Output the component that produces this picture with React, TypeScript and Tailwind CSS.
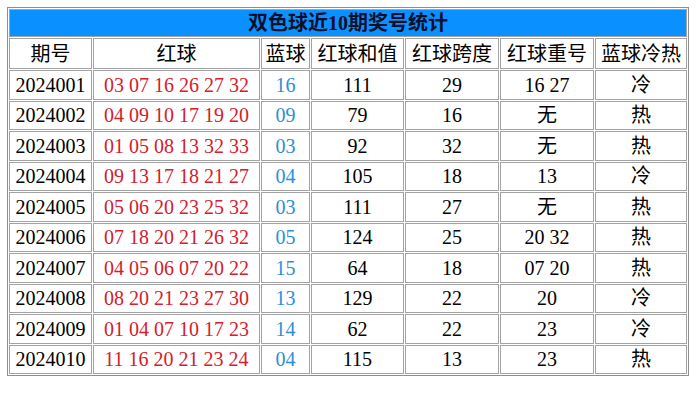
import React from "react";

const rows: [string, string, string, string, string, string, string][] = [
  ["2024001", "03 07 16 26 27 32", "16", "111", "29", "16 27", "冷"],
  ["2024002", "04 09 10 17 19 20", "09", "79", "16", "无", "热"],
  ["2024003", "01 05 08 13 32 33", "03", "92", "32", "无", "热"],
  ["2024004", "09 13 17 18 21 27", "04", "105", "18", "13", "冷"],
  ["2024005", "05 06 20 23 25 32", "03", "111", "27", "无", "热"],
  ["2024006", "07 18 20 21 26 32", "05", "124", "25", "20 32", "热"],
  ["2024007", "04 05 06 07 20 22", "15", "64", "18", "07 20", "热"],
  ["2024008", "08 20 21 23 27 30", "13", "129", "22", "20", "冷"],
  ["2024009", "01 04 07 10 17 23", "14", "62", "22", "23", "冷"],
  ["2024010", "11 16 20 21 23 24", "04", "115", "13", "23", "热"],
];

const headers = ["期号", "红球", "蓝球", "红球和值", "红球跨度", "红球重号", "蓝球冷热"];
const widths = ["w-[83px]", "w-[167px]", "w-[49px]", "w-[93px]", "w-[94px]", "w-[94px]", "w-[92px]"];

const cell = "border border-[#a3a3a3] p-0 text-center align-middle";

export default function App() {
  return (
    <div
      className="w-[700px] h-[411px] bg-white pl-[7px] pt-[7px]"
      style={{ fontFamily: '"Liberation Serif", "Noto Sans CJK SC", serif' }}
    >
      <table className="w-[682px] border border-[#8f8f8f] border-separate border-spacing-[1px] text-[20px] text-black leading-none table-fixed">
        <colgroup>
          {widths.map((w, i) => (
            <col key={i} className={w} />
          ))}
        </colgroup>
        <tbody>
          <tr>
            <td colSpan={7} className={`${cell} h-[28px] bg-[#0b90ff] font-bold text-[#0a0f2a] text-[20px]`}>
              双色球近10期奖号统计
            </td>
          </tr>
          <tr>
            {headers.map((h) => (
              <td key={h} className={`${cell} h-[31px] text-[20px]`}>
                {h}
              </td>
            ))}
          </tr>
          {rows.map((r) => (
            <tr key={r[0]}>
              <td className={`${cell} h-[29.5px]`}>{r[0]}</td>
              <td className={`${cell} text-[#d4202c]`}>{r[1]}</td>
              <td className={`${cell} text-[#2a8fd8]`}>{r[2]}</td>
              <td className={cell}>{r[3]}</td>
              <td className={cell}>{r[4]}</td>
              <td className={cell}>{r[5]}</td>
              <td className={cell}>{r[6]}</td>
            </tr>
          ))}
        </tbody>
      </table>
    </div>
  );
}
